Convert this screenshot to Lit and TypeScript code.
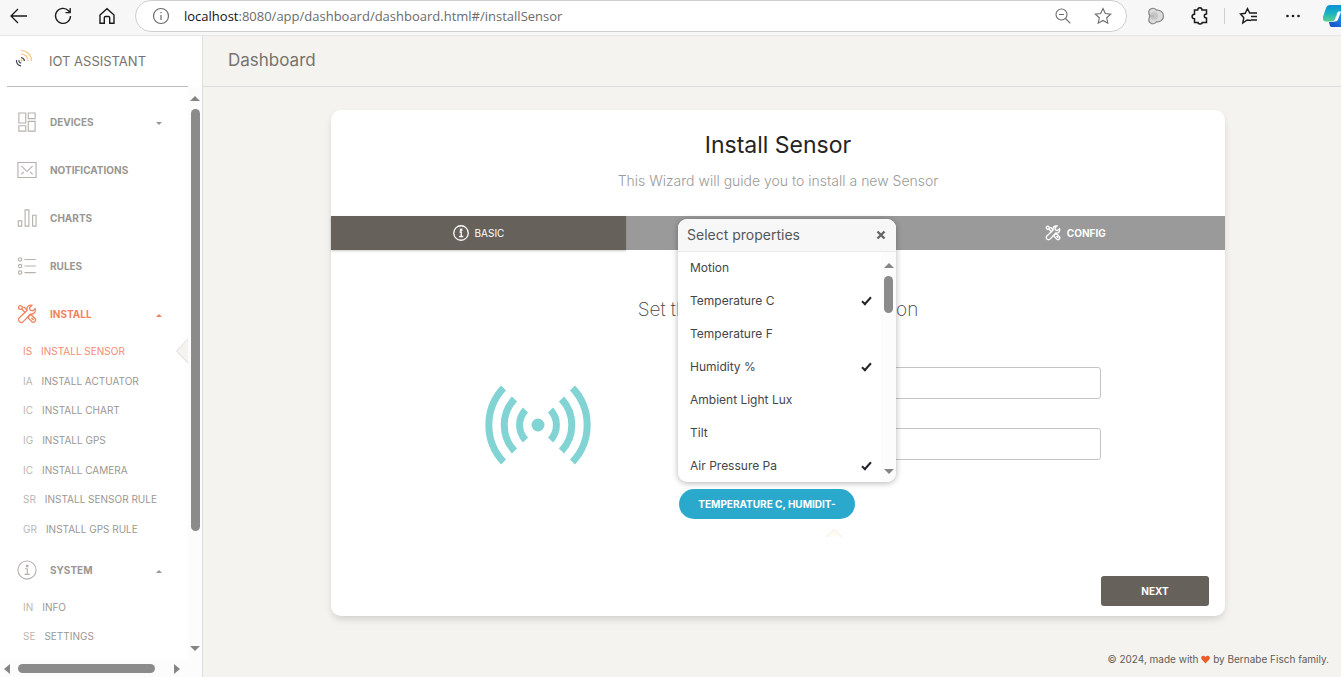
import { LitElement, html, css, svg, nothing } from "lit";
import { customElement, state } from "lit/decorators.js";
import { classMap } from "lit/directives/class-map.js";

const icon = (size: number, box: number, body: unknown, stroke = 1) => html`
  <svg width=${size} height=${size} viewBox="0 0 ${box} ${box}" fill="none" stroke="currentColor"
    stroke-width=${stroke} aria-hidden="true">${body}</svg>`;

const tools = svg`
  <path d="M29 7.500l-4 3.500-4-1-1-4 4-4c-5-1-9 2-8 8.500L3.800 22a4.300 4.300 0 0 0 6.200 6.200L21.500 16c5.500 1 9-3.500 7.500-8.500z"/>
  <circle cx="5.500" cy="5.500" r="3"/>
  <path d="M7.500 8l6 6M10 5.500l2 0 4.500 4.500M18.500 20.500l1.500-2.500 3-.5 6 6c2.500 3-2 7.500-5 5l-6-6zM23 22l3.500 3.500"/>`;

const info = svg`
  <circle cx="16" cy="16" r="14.500"/>
  <path d="M13 14h3.500v9M12 23h8.500"/><path d="M15 8.500h2.500v2h-2.500z"/>`;

const glyphs: Record<string, unknown> = {
  devices: svg`<path d="M3 1.500h11v16H3zM18 1.500h11v9H18zM3 22h11v8.500H3zM18 15h11v15.500H18z"/>`,
  mail: svg`<path d="M1.500 4h29v24h-29zM7 9.500l9 9 9-9M7 23l4-4M25 23l-4-4"/>`,
  charts: svg`<path d="M2 20.500h5.500V29H2zM13 3h6v26h-6zM25 11.500h5.500V29H25z"/>`,
  rules: svg`<circle cx="5" cy="5.500" r="2.700"/><circle cx="5" cy="16" r="2.700"/><circle cx="5" cy="26.500" r="2.700"/>
    <path d="M12 5.500h18M12 16h18M12 26.500h18"/>`,
  tools,
  info,
};

interface Sub { abbr: string; label: string; active?: boolean }
interface Entry { icon: string; label: string; caret?: "up" | "down"; active?: boolean; list?: string; items?: Sub[] }

const NAV: Entry[] = [
  { icon: "devices", label: "DEVICES", caret: "down" },
  { icon: "mail", label: "NOTIFICATIONS" },
  { icon: "charts", label: "CHARTS" },
  { icon: "rules", label: "RULES" },
  {
    icon: "tools", label: "INSTALL", caret: "up", active: true, list: "long",
    items: [
      { abbr: "IS", label: "INSTALL SENSOR", active: true },
      { abbr: "IA", label: "INSTALL ACTUATOR" },
      { abbr: "IC", label: "INSTALL CHART" },
      { abbr: "IG", label: "INSTALL GPS" },
      { abbr: "IC", label: "INSTALL CAMERA" },
      { abbr: "SR", label: "INSTALL SENSOR RULE" },
      { abbr: "GR", label: "INSTALL GPS RULE" },
    ],
  },
  {
    icon: "info", label: "SYSTEM", caret: "up", list: "short",
    items: [
      { abbr: "IN", label: "INFO" },
      { abbr: "SE", label: "SETTINGS" },
    ],
  },
];

@customElement("browser-bar")
export class BrowserBar extends LitElement {
  static styles = css`
    :host { display: flex; align-items: center; flex: none; background: #f7f7f7; border-bottom: 1px solid #e6e6e6;
      height: 36px; padding: 0 0 3px 9px; color: #1b1b1b; overflow: hidden; box-sizing: border-box; }
    button { border: 0; background: none; padding: 0; color: inherit; display: flex; flex: none; }
    .nav { display: flex; gap: 24px; }
    .address { flex: 1; min-width: 0; display: flex; align-items: center; height: 32px; margin: 0 19px 0 18px; padding: 0 13px 0 15px;
      background: #fff; border: 1px solid #cfcfcf; border-radius: 16px; box-sizing: border-box; color: #6b6b6b; }
    .url { flex: 1; margin-left: 13px; font: 13px/20px "Open Sans", sans-serif; color: #6b6b6b; white-space: nowrap; }
    .host { color: #111; }
    .address .end { display: flex; gap: 20px; }
    .line { width: 1px; height: 16px; background: #cfcfcf; margin: 0 14px; }
    .pair { display: flex; gap: 24px; }
    .copilot { width: 18px; margin-left: 20px; overflow: hidden; display: block; height: 24px; }
  `;
  render() {
    return html`
      <div class="nav">
        <button aria-label="Back">${icon(20, 20, svg`<path d="M18 10H2.500M9 3L2 10l7 7"/>`, 1.3)}</button>
        <button aria-label="Refresh">${icon(20, 20, svg`<path d="M17.500 10a7.500 7.500 0 1 1-2-5.200L17 6.500M17.200 2v4.700h-4.700"/>`, 1.3)}</button>
        <button aria-label="Home">${icon(20, 20, svg`<path d="M3 9l7-6.200L17 9v8.200h-4.300v-5.500c0-.9-.4-1.200-1.200-1.200h-3c-.8 0-1.200.3-1.200 1.200v5.500H3z"/>`, 1.4)}</button>
      </div>
      <div class="address">
        ${icon(20, 20, svg`<circle cx="10" cy="10" r="7.500"/><path d="M10 9v5M10 6v1.300"/>`, 1.2)}
        <span class="url"><span class="host">localhost</span>:8080/app/dashboard/dashboard.html#/installSensor</span>
        <div class="end">
          <button aria-label="Zoom">${icon(20, 20, svg`<circle cx="8.500" cy="8.500" r="5.500"/><path d="M12.500 12.500l4.800 4.800M6 8.500h5"/>`, 1.1)}</button>
          <button aria-label="Favorite">${icon(20, 20, svg`<path d="M10 2.500l2.300 5 5.400.6-4 3.700 1.100 5.400-4.800-2.700-4.800 2.700 1.100-5.400-4-3.700 5.400-.6z"/>`, 1.1)}</button>
        </div>
      </div>
      <div class="pair">
        <button aria-label="Extension">${icon(20, 20, svg`<path fill="#dcdcdc" stroke="#858585" d="M5 2.800c2-1 4.500-.3 5.500 1.400 4-.4 7 2.300 7 5.800s-3 6.200-7 5.800c-1 1.700-3.500 2.400-5.500 1.400-2.500-1.200-2.700-4-1.200-7.200-1.500-3.200-1.300-6 1.200-7.200z"/><circle cx="8" cy="10" r="4" fill="#c6c6c6" stroke="none"/><path stroke="#aaa" d="M4 10h4"/>`, 1.2)}</button>
        <button aria-label="Extensions">${icon(20, 20, svg`<path d="M4.500 4h3.200c0-3 4.300-3 4.300 0h4.500v4c-2.900 0-2.900 4 0 4v4.500H12.200c0 2-4.200 2-4.200 0H4.500v-3.800c-3.200 0-3.200-4.500 0-4.500z"/>`, 1.5)}</button>
      </div>
      <span class="line"></span>
      <div class="pair">
        <button aria-label="Favorites">${icon(20, 20, svg`<path d="M12 14.500L8.200 14l-4.400 3 1-5.300L1.500 8l4.700-.7L8.500 2.500l2.200 4.500H18M12 10.500h6M12 14h6"/>`, 1.4)}</button>
        <button aria-label="Settings and more">${icon(20, 20, svg`<g fill="currentColor" stroke="none"><circle cx="4.500" cy="10" r="1.300"/><circle cx="10" cy="10" r="1.300"/><circle cx="15.500" cy="10" r="1.300"/></g>`)}</button>
      </div>
      <button class="copilot" aria-label="Copilot">
        <svg width="24" height="24" viewBox="0 0 24 24" aria-hidden="true">
          <defs>
            <linearGradient id="a" x1="0" y1="0" x2="0" y2="1"><stop offset="0" stop-color="#0d90d6"/><stop offset=".5" stop-color="#19b3c0"/><stop offset="1" stop-color="#5bd08c"/></linearGradient>
            <linearGradient id="b" x1="0" y1="1" x2="1" y2="0"><stop offset="0" stop-color="#1648c8"/><stop offset="1" stop-color="#1fb2f5"/></linearGradient>
          </defs>
          <path fill="url(#b)" d="M14 7h9c3 0 2 4 1 7l-2 6c-.8 2-2 3-4 3H9c-2 0-2.500-2-3-5h3.500c1.500 0 2.500-.8 3-2z"/>
          <path fill="url(#a)" d="M7 1h11c1.500 0 2 2 3 6h-4c-1.500 0-2.500.8-3 2l-2 6c-1 2-2 2.500-4 2.500H3C0 17.500-.5 15 .3 12L3 4c.8-2 2-3 4-3z"/>
          <path fill="#fff" d="M15.500 7.500H18l-3 8c-.5 1.300-1.500 2-2.800 2h-1.400c.8-.4 1.200-1.300 1.500-2l2-6.500c.3-.8.6-1.200 1.200-1.500z"/>
        </svg>
      </button>`;
  }
}

@customElement("scroll-rail")
export class ScrollRail extends LitElement {
  static properties = { horizontal: { type: Boolean, reflect: true } };
  static styles = css`
    :host { display: flex; flex-direction: column; align-items: center; width: 15px; background: #fcfcfc; box-sizing: border-box; flex: none; }
    :host([horizontal]) { flex-direction: row; width: auto; height: 17px; }
    .way { flex: 1; width: 9px; padding: 8px 0 5px; min-height: 0; }
    :host([horizontal]) .way { width: auto; height: 9px; padding: 0 4px 0 8px; }
    .thumb { display: block; border-radius: 5px; background: #8b8b8b; height: var(--thumb); }
    :host([horizontal]) .thumb { height: 100%; width: var(--thumb); }
    svg { display: block; fill: #858585; flex: none; }
  `;
  render() {
    const h = (this as unknown as { horizontal?: boolean }).horizontal;
    return h
      ? html`<svg width="6" height="10" viewBox="0 0 6 10"><path d="M6 0v10L0 5z"/></svg>
          <div class="way"><span class="thumb"></span></div>
          <svg width="6" height="10" viewBox="0 0 6 10"><path d="M0 0v10l6-5z"/></svg>`
      : html`<svg width="10" height="5" viewBox="0 0 10 5"><path d="M0 5h10L5 0z"/></svg>
          <div class="way"><span class="thumb"></span></div>
          <svg width="10" height="5" viewBox="0 0 10 5"><path d="M0 0h10L5 5z"/></svg>`;
  }
}

@customElement("side-nav")
export class SideNav extends LitElement {
  static styles = css`
    :host { display: flex; flex-direction: column; width: 203px; flex: none; background: #fff; border-right: 1px solid #ddd;
      box-sizing: border-box; color: #66615b; min-height: 0; }
    .brand { display: flex; align-items: center; height: 50px; margin: 0 14px 0 7px; padding-left: 8px; gap: 16px;
      border-bottom: 1px solid #bbb; font-size: 13px; line-height: 20px; color: #77726d; text-decoration: none; flex: none; }
    .brand svg { margin-bottom: 4px; }
    .body { flex: 1; display: flex; min-height: 0; }
    nav { flex: 1; min-width: 0; padding-top: 11px; overflow: hidden; }
    a { color: inherit; text-decoration: none; }
    .entry { display: flex; align-items: center; width: 100%; height: 48px; padding: 0 26px 0 17px; gap: 13px; border: 0;
      background: none; font: 700 10px/16px Inter, sans-serif; color: #9a9691; text-align: left; box-sizing: border-box; }
    .entry svg { color: #b5b2ae; flex: none; }
    .entry .name { flex: 1; }
    .entry.active, .entry.active svg { color: #f0835c; }
    .caret { border: 3px solid transparent; border-top-color: currentColor; border-bottom: 0; margin-top: 3px; }
    .caret.up { border-top: 0; border-bottom: 3px solid currentColor; }
    ul { list-style: none; margin: -2px 0 2px; padding: 0; display: grid; grid-auto-rows: 1fr; }
    .long { height: 208px; }
    .short { height: 58px; }
    li { display: flex; align-items: center; justify-content: space-between; }
    li a { display: flex; gap: 9px; padding-left: 23px; font-size: 10px; line-height: 16px; color: #9a9793; white-space: nowrap; }
    .abbr { color: #b9b6b3; }
    li.active a, li.active .abbr { color: #f58a72; }
    .pointer { display: block; }
    .rail { width: 14px; padding: 9px 0; }
    .rail { --thumb: 422px; }
    .across { --thumb: 137px; padding: 0 22px 0 4px; }
  `;
  render() {
    return html`
      <a class="brand" href="#/">
        <svg width="18" height="22" viewBox="0 0 18 22" fill="none" stroke-width="1.200" aria-hidden="true">
          <path stroke="#f6c98a" d="M6 2.500c6 0 10.500 4.500 10.500 10.500M6 6c4 0 7 3 7 7" />
          <path stroke="#3d4654" d="M6 9.500c2 .2 3.300 1.500 3.500 3.500M1.500 12c-.5 3 1.500 5.500 4.500 5.800M4 12.200c-.3 1.500.6 2.800 2.200 3" />
          <circle cx="6.500" cy="12.500" r="1" fill="#f3b65c" stroke="none" />
        </svg>
        <span>IOT ASSISTANT</span>
      </a>
      <div class="body">
        <nav>
          ${NAV.map((e) => html`
            <button class=${classMap({ entry: true, active: !!e.active })}>
              ${icon(20, 32, glyphs[e.icon], e.active ? 2 : 1.8)}
              <span class="name">${e.label}</span>
              ${e.caret ? html`<span class="caret ${e.caret}"></span>` : nothing}
            </button>
            ${e.items ? html`<ul class=${e.list ?? ""}>${e.items.map((s) => html`
              <li class=${classMap({ active: !!s.active })}>
                <a href="#/"><span class="abbr">${s.abbr}</span><span>${s.label}</span></a>
                ${s.active ? html`<svg class="pointer" width="12" height="24" viewBox="0 0 12 24"><path d="M12 0L0 12l12 12z" fill="#f4f3ef"/><path d="M12 0L.5 12 12 24" fill="none" stroke="#ddd"/></svg>` : nothing}
              </li>`)}</ul>` : nothing}`)}
        </nav>
        <scroll-rail class="rail"></scroll-rail>
      </div>
      <scroll-rail class="across" horizontal></scroll-rail>`;
  }
}

@customElement("property-picker")
export class PropertyPicker extends LitElement {
  @state() private options = [
    { name: "Motion", on: false },
    { name: "Temperature C", on: true },
    { name: "Temperature F", on: false },
    { name: "Humidity %", on: true },
    { name: "Ambient Light Lux", on: false },
    { name: "Tilt", on: false },
    { name: "Air Pressure Pa", on: true },
  ];
  static styles = css`
    :host { display: block; position: relative; width: 176px; }
    .toggle { width: 100%; height: 30px; border: 0; border-radius: 15px; background: #2ba9cd; color: #fff; padding: 0 18px;
      font: 700 10px/16px Inter, sans-serif; white-space: nowrap; overflow: hidden; }
    .tip { display: block; margin: 10px 0 0 147px; }
    .menu { position: absolute; left: -1px; bottom: 55px; width: 218px; height: 263px; background: #fff; border-radius: 9px;
      box-shadow: 0 1px 6px rgba(0, 0, 0, 0.3); overflow: hidden; display: flex; flex-direction: column; }
    .head { display: flex; align-items: center; justify-content: space-between; height: 32px; flex: none; padding: 0 10px 0 9px;
      background: #f7f7f7; border-bottom: 1px solid #ebebeb; font-size: 14px; line-height: 20px; color: #55565a; }
    .close { border: 0; padding: 0; background: none; color: #666; display: flex; }
    .list { display: flex; flex: 1; min-height: 0; }
    .items { flex: 1; display: grid; grid-template-rows: repeat(7, 1fr); }
    label { display: flex; align-items: center; justify-content: space-between; padding: 0 8px 0 12px;
      font-size: 12px; line-height: 16px; color: #44464a; }
    input { appearance: none; margin: 0; width: 14px; height: 14px; position: relative; }
    input:checked::after { content: ""; position: absolute; left: 5px; top: 1px; width: 3px; height: 8px;
      border: solid #212529; border-width: 0 2px 2px 0; transform: rotate(42deg); }
    .rail { padding: 11px 0 8px; --thumb: 37px; }
  `;
  private toggle(i: number) {
    this.options = this.options.map((o, k) => (k === i ? { ...o, on: !o.on } : o));
  }
  render() {
    return html`
      <button class="toggle" aria-expanded="true">TEMPERATURE C, HUMIDIT-</button>
      <svg class="tip" width="16" height="8" viewBox="0 0 16 8"><path d="M0 8l8-8 8 8z" fill="#fffcf5"/><path d="M0 8l8-7.500L16 8" fill="none" stroke="#f3ebdd"/></svg>
      <div class="menu">
        <div class="head"><span>Select properties</span>
          <button class="close" aria-label="Close">${icon(10, 10, svg`<path d="M1.500 1.500l7 7M8.500 1.500l-7 7"/>`, 2.4)}</button>
        </div>
        <div class="list">
          <div class="items">${this.options.map((o, i) => html`
            <label>${o.name}<input type="checkbox" .checked=${o.on} @change=${() => this.toggle(i)} /></label>`)}</div>
          <scroll-rail class="rail"></scroll-rail>
        </div>
      </div>`;
  }
}

@customElement("install-wizard")
export class InstallWizard extends LitElement {
  static styles = css`
    :host { display: block; background: #fff; border-radius: 10px; box-shadow: 0 4px 8px -2px rgba(0, 0, 0, 0.18); }
    header { text-align: center; padding: 20px 16px 25px; }
    h1 { margin: 0; font-size: 23px; line-height: 30px; font-weight: 400; color: #252422; }
    p { margin: 10px 0 0; font-size: 14px; line-height: 21px; font-weight: 300; color: #9a9a9a; }
    .tabs { display: grid; grid-template-columns: 33% 1fr 1fr; height: 34px; background: #9a9a9a; }
    .tab { border: 0; background: none; color: #fff; display: flex; align-items: center; justify-content: center; gap: 6px; padding: 0;
      font: 700 10px/16px Inter, sans-serif; }
    .tab.on { background: #66615b; font-weight: 400; box-shadow: 0 1px 2px rgba(102, 97, 91, 0.35); }
    h2 { margin: 46px 0 0; text-align: center; font-size: 19px; line-height: 28px; font-weight: 200; color: #444; }
    .form { display: grid; grid-template-columns: 348px 1fr; padding: 43px 124px 0 0; }
    .art { display: grid; justify-content: end; padding: 18px 87px 0 0; }
    .fields { display: flex; flex-direction: column; }
    .field { height: 32px; border: 1px solid #c4c4c4; border-radius: 3px; box-sizing: border-box; background: #fff; padding: 0 10px;
      margin-bottom: 29px; width: 100%; font: 12px Inter, sans-serif; }
    .foot { display: flex; justify-content: flex-end; padding: 39px 16px 10px; }
    .next { width: 108px; height: 30px; border: 0; border-radius: 3px; background: #66615b; color: #fff; font: 700 10px/16px Inter, sans-serif; }
  `;
  render() {
    return html`
      <header><h1>Install Sensor</h1><p>This Wizard will guide you to install a new Sensor</p></header>
      <div class="tabs">
        <button class="tab on">${icon(16, 32, info, 2.6)}BASIC</button>
        <button class="tab" aria-label="Properties"></button>
        <button class="tab">${icon(16, 32, tools, 2.6)}CONFIG</button>
      </div>
      <h2>Set the basic Sensor information</h2>
      <div class="form">
        <div class="art">
          <svg width="108" height="80" viewBox="-54 -40 108 80" fill="none" stroke="#82d3d3" stroke-width="7" aria-hidden="true">
            <circle r="6.500" fill="#82d3d3" stroke="none" />
            <path d="M12.500 -15a22 22 0 0 1 0 30M23.500 -26a38 38 0 0 1 0 52M34.500 -37a54 54 0 0 1 0 74" />
            <path d="M-12.500 -15a22 22 0 0 0 0 30M-23.500 -26a38 38 0 0 0 0 52M-34.500 -37a54 54 0 0 0 0 74" />
          </svg>
        </div>
        <div class="fields">
          <input class="field" type="text" aria-label="Name" />
          <input class="field" type="text" aria-label="Location" />
          <property-picker></property-picker>
        </div>
      </div>
      <div class="foot"><button class="next">NEXT</button></div>`;
  }
}

@customElement("app-root")
export class AppRoot extends LitElement {
  static styles = css`
    :host { display: flex; flex-direction: column; height: 100vh; font-family: Inter, sans-serif; background: #f4f3ef; overflow: hidden; }
    .page { flex: 1; display: flex; min-height: 0; }
    main { flex: 1; min-width: 0; display: flex; flex-direction: column; }
    .top { display: flex; align-items: center; padding: 0 25px 3px; box-sizing: border-box; height: 51px; flex: none;
      border-bottom: 1px solid #ddd; font-size: 17px; line-height: 24px; color: #77726d; }
    install-wizard { margin: 23px 116px 0 128px; }
    footer { margin-top: auto; padding: 0 12px 10px; text-align: right; font-size: 10px; line-height: 16px; color: #5f5c58; }
    .heart { vertical-align: -1px; }
  `;
  render() {
    return html`
      <browser-bar></browser-bar>
      <div class="page">
        <side-nav></side-nav>
        <main>
          <div class="top">Dashboard</div>
          <install-wizard></install-wizard>
          <footer>© 2024, made with
            <svg class="heart" width="9" height="9" viewBox="0 0 10 10" aria-label="love"><path fill="#eb5e28" d="M5 9.500L.8 5C-.8 2.500 1 .6 2.800.8 4 .9 4.700 1.600 5 2.400c.3-.8 1-1.500 2.200-1.600C9 .6 10.800 2.500 9.200 5z"/></svg>
            by Bernabe Fisch family.</footer>
        </main>
      </div>`;
  }
}
